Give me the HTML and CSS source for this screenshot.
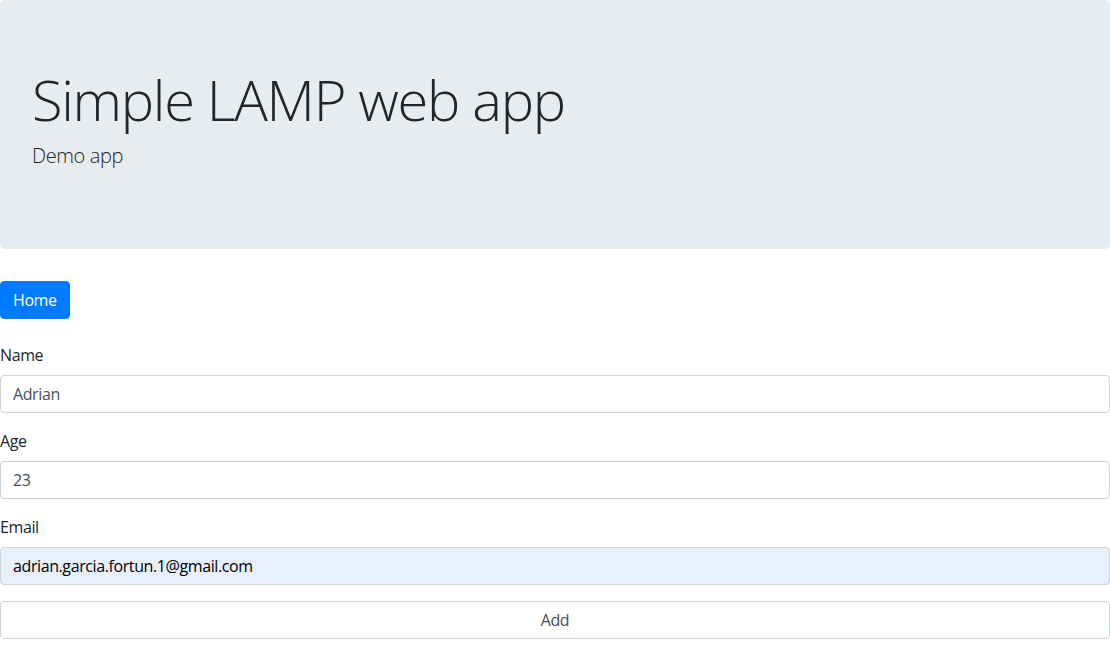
FILE: index.html
```html
<!DOCTYPE html>
<html lang="en">
<head>
<meta charset="utf-8">
<title>Simple LAMP web app</title>
<link rel="stylesheet" href="styles.css">
</head>
<body>
<div class="container">
  <div class="jumbotron">
    <h1 class="display">Simple LAMP web app</h1>
    <p class="lead">Demo app</p>
  </div>
  <nav class="nav">
    <a class="btn btn-primary" href="#">Home</a>
  </nav>
  <form class="form">
    <div class="form-group">
      <label for="name">Name</label>
      <input class="form-control" id="name" type="text" value="Adrian">
    </div>
    <div class="form-group">
      <label for="age">Age</label>
      <input class="form-control" id="age" type="text" value="23">
    </div>
    <div class="form-group">
      <label for="email">Email</label>
      <input class="form-control autofill" id="email" type="text" value="adrian.garcia.fortun.1@gmail.com">
    </div>
    <button class="form-control btn-add" type="button">Add</button>
  </form>
</div>
</body>
</html>
```
FILE: styles.css
```css
* { box-sizing: border-box; }
html, body { margin: 0; padding: 0; }
body {
  font-family: "Open Sans", "Noto Sans", sans-serif;
  font-size: 16px;
  line-height: 1.5;
  letter-spacing: -0.4px;
  color: #212529;
  background: #fff;
}
.container { width: 1110px; }
.jumbotron {
  background: #e9ecef;
  border-radius: 4.8px;
  padding: 64px 32px;
  margin-bottom: 32px;
}
.display {
  margin: 0 0 8px;
  padding-top: 2px;
  font-size: 56px;
  font-weight: 300;
  line-height: 1.2;
  letter-spacing: -1.3px;
}
.lead {
  margin: 0 0 14px;
  font-size: 20px;
  font-weight: 300;
  letter-spacing: -0.4px;
}
.nav { display: flex; margin-bottom: 24px; }
.btn {
  display: inline-block;
  padding: 6px 12px;
  border: 1px solid transparent;
  border-radius: 4px;
  font-size: 16px;
  line-height: 24px;
  text-decoration: none;
}
.btn-primary { background: #007bff; border-color: #007bff; color: #fff; }
.form-group { margin-bottom: 16px; }
label { display: inline-block; margin-bottom: 8px; }
.form-control {
  display: block;
  width: 100%;
  height: 38px;
  padding: 6px 12px;
  font-family: inherit;
  font-size: 16px;
  line-height: 24px;
  letter-spacing: -0.4px;
  color: #495057;
  background: #fff;
  border: 1px solid #ced4da;
  border-radius: 4px;
  margin: 0;
}
.autofill { background: #e8f0fe; color: #000; }
.btn-add { text-align: center; cursor: pointer; }
```
